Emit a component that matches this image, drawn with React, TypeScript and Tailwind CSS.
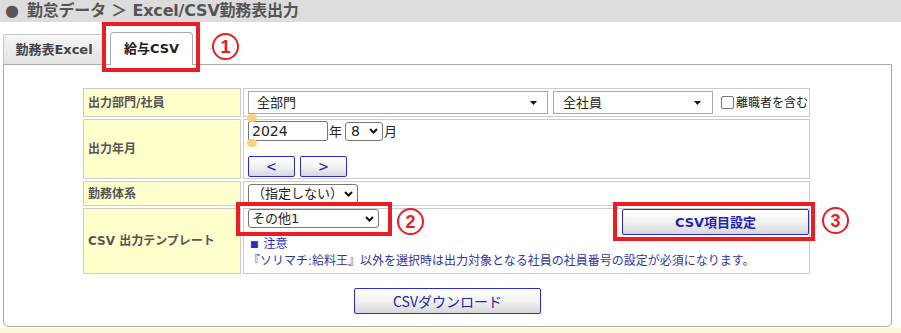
import React from "react";

const base = "font-['DejaVu_Sans','Noto_Sans_CJK_JP',sans-serif]";
const cjk = "font-['Noto_Sans_CJK_JP',sans-serif]";

const Tri = () => (
  <svg width="7" height="4" viewBox="0 0 7 4" className="shrink-0">
    <path d="M0 0h7L3.5 4z" fill="#111" />
  </svg>
);

const Chevron = () => (
  <svg width="9" height="6" viewBox="0 0 9 6" className="shrink-0">
    <path d="M1 1l3.5 3.5L8 1" fill="none" stroke="#111" strokeWidth="2" />
  </svg>
);

const blueBtn =
  "border border-[#2a2ad4] rounded-[2px] bg-linear-to-b from-white via-[#f3f3f3] to-[#d6d6d6] text-[#2323b8] flex items-center justify-center";

const labelCell =
  "bg-[#ffffcc] border border-[#cccccc] pl-[4px] flex items-center text-[12px] font-bold text-[#555] leading-none";
const valueCell = "border border-[#cccccc] pl-[4px] bg-white";

function Circled({ n, className }: { n: string; className: string }) {
  return (
    <div
      className={`absolute w-[27px] h-[27px] rounded-full border-[2.5px] border-[#ec1c24] text-[#ec1c24] flex items-center justify-center text-[18px] font-bold leading-none font-['Liberation_Sans',sans-serif] ${className}`}
    >
      {n}
    </div>
  );
}

export default function App() {
  return (
    <div className={`relative w-[901px] h-[333px] bg-white overflow-hidden ${base}`}>
      {/* Header */}
      <div className="h-[22px] bg-[#dcdcdc] flex items-center pl-[5px] text-[16px] font-bold text-[#555] leading-none">
        <span>●</span>
        <span className="ml-[8px] tracking-[-0.2px]">勤怠データ ＞ Excel/CSV勤務表出力</span>
      </div>

      {/* Tabs */}
      <div className="h-[42px] flex items-end pl-[3px]">
        <div className="w-[102px] h-[30px] border-t border-l border-r border-[#c8c8c8] rounded-t-[4px] bg-linear-to-b from-[#f6f6f6] to-[#e2e2e2] flex items-center justify-center text-[13px] font-bold text-[#444] leading-none">
          勤務表Excel
        </div>
        <div className="relative z-10 -mb-px ml-[5px] w-[83px] h-[33px] border-t border-l border-r border-[#aaa] rounded-t-[4px] bg-white flex items-center justify-center pb-[1px] text-[13px] font-bold text-[#222] leading-none">
          給与CSV
        </div>
      </div>

      {/* Panel */}
      <div className="ml-[3px] w-[889px] h-[263px] border border-[#aaa] rounded-b-[5px] pt-[23px]">
        <div className="ml-[79px] grid grid-cols-[158px_567px] grid-rows-[29px_60px_25px_66px] gap-[2px]">
          {/* Row 1 */}
          <div className={labelCell}>出力部門/社員</div>
          <div className={`${valueCell} flex items-center text-[13px] text-[#222] leading-none`}>
            <div className="w-[300px] h-[23px] border border-[#a9a9a9] bg-white flex items-center justify-between pl-[8px] pr-[10px]">
              <span>全部門</span>
              <Tri />
            </div>
            <div className="ml-[5px] w-[160px] h-[23px] border border-[#a9a9a9] bg-white flex items-center justify-between pl-[9px] pr-[11px]">
              <span>全社員</span>
              <Tri />
            </div>
            <div className="ml-[8px] w-[13px] h-[13px] border border-[#767676] rounded-[2px] bg-white" />
            <span className="ml-[2px] text-[12px] whitespace-nowrap">離職者を含む</span>
          </div>

          {/* Row 2 */}
          <div className={labelCell}>出力年月</div>
          <div className={`${valueCell} pt-[1px] text-[13px] text-[#222] leading-none`}>
            <div className="flex items-center h-[20px]">
              <div className="w-[80px] h-[20px] border border-[#767676] rounded-[2px] bg-white flex items-center pl-[3px] text-[14px]">
                2024
              </div>
              <span className="ml-[1px]">年</span>
              <div className="ml-[3px] w-[38px] h-[19px] border border-[#767676] rounded-[3px] bg-white flex items-center justify-between pl-[5px] pr-[4px] text-[14px]">
                <span>8</span>
                <Chevron />
              </div>
              <span className="ml-[1px]">月</span>
            </div>
            <div className="flex mt-[15px] gap-[5px]">
              <div className={`${blueBtn} w-[47px] h-[21px] text-[17px] pb-[2px] ${cjk}`}>&lt;</div>
              <div className={`${blueBtn} w-[47px] h-[21px] text-[17px] pb-[2px] ${cjk}`}>&gt;</div>
            </div>
          </div>

          {/* Row 3 */}
          <div className={labelCell}>勤務体系</div>
          <div className={`${valueCell} flex items-center text-[13px] text-[#222] leading-none`}>
            <div className="w-[110px] h-[20px] border border-[#767676] rounded-[3px] bg-white flex items-center justify-between pl-[3px] pr-[4px]">
              <span>（指定しない）</span>
              <Chevron />
            </div>
          </div>

          {/* Row 4 */}
          <div className={labelCell}>CSV 出力テンプレート</div>
          <div className={`${valueCell} leading-none`}>
            <div className="flex justify-between items-start h-[26px]">
              <div className="w-[131px] h-[19px] border border-[#767676] rounded-[3px] bg-white flex items-center justify-between pl-[3px] pr-[4px] text-[13px] text-[#222]">
                <span>その他1</span>
                <Chevron />
              </div>
              <div className={`${blueBtn} w-[187px] h-[26px] text-[13px] font-bold text-[#1e1e9e]`}>
                CSV項目設定
              </div>
            </div>
            <div className="mt-[1px] h-[16px] flex items-center text-[12px] text-[#2a2acc]">
              <span className="text-[9px] ml-[2px]">■</span>
              <span className="ml-[5px]">注意</span>
            </div>
            <div className="h-[17px] flex items-center text-[12px] text-[#3232a8] whitespace-nowrap">
              『ソリマチ:給料王』以外を選択時は出力対象となる社員の社員番号の設定が必須になります。
            </div>
          </div>
        </div>

        <div className="flex justify-center mt-[14px]">
          <div className={`${blueBtn} w-[187px] h-[26px] text-[14px] ${cjk} text-[#2222bb]`}>
            CSVダウンロード
          </div>
        </div>
      </div>

      {/* Bottom strip */}
      <div className="mt-[1px] h-[6px] bg-[#fff5d6]" />

      {/* Input marker dots */}
      <div className="absolute left-[247px] top-[114px] w-[10px] h-[8px] rounded-full bg-[#fccf72] opacity-90" />
      <div className="absolute left-[247px] top-[139px] w-[10px] h-[8px] rounded-full bg-[#fccf72] opacity-90" />

      {/* Annotations */}
      <div className="absolute left-[102px] top-[22px] w-[98px] h-[50px] border-4 border-[#ec1c24]" />
      <Circled n="1" className="left-[212px] top-[33px]" />
      <div className="absolute left-[236px] top-[202px] w-[156px] h-[34px] border-4 border-[#ec1c24]" />
      <Circled n="2" className="left-[397px] top-[208px]" />
      <div className="absolute left-[613px] top-[202px] w-[202px] h-[39px] border-4 border-[#ec1c24]" />
      <Circled n="3" className="left-[822px] top-[207px]" />
    </div>
  );
}
